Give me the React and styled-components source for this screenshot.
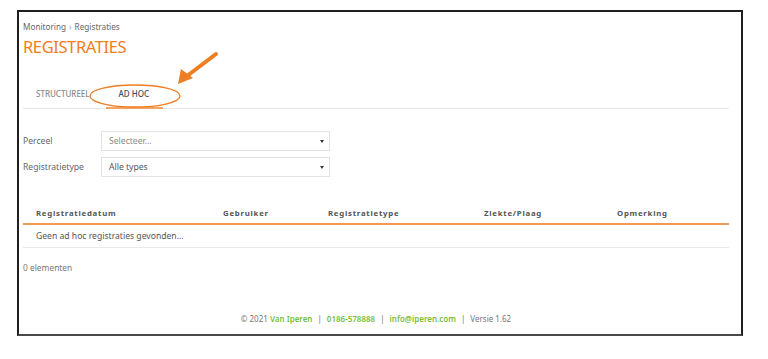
import React from "react";
import styled, { createGlobalStyle } from "styled-components";

const GlobalStyle = createGlobalStyle`
  html, body {
    margin: 0;
    padding: 0;
    background: #ffffff;
  }
  body {
    font-family: "Noto Sans", "Open Sans", sans-serif;
    color: #555;
  }
`;

const Frame = styled.div`
  position: relative;
  box-sizing: border-box;
  width: 726px;
  height: 326px;
  margin: 10px 0 0 17px;
  border: 2px solid #1f1f1f;
  border-bottom-color: #4a4a4a;
  padding: 9px 12px 0 4px;
  display: flex;
  flex-direction: column;
`;

const Breadcrumb = styled.div`
  font-size: 8.2px;
  line-height: 12px;
  color: #666;
  span {
    color: #999;
    margin: 0 3px;
  }
`;

const Title = styled.h1`
  margin: 4px 0 0;
  font-size: 16.5px;
  line-height: 20px;
  font-weight: 400;
  color: #f07d22;
  letter-spacing: -0.4px;
`;

const TabBar = styled.div`
  display: flex;
  gap: 2px;
  margin-top: 28px;
  border-bottom: 1px solid #e6e6e6;
`;

const Tab = styled.div`
  padding: 4px 14px 8px 13px;
  font-size: 8px;
  line-height: 10px;
  color: ${(p) => (p.active ? "#3d4a5c" : "#8a8a8a")};
  font-weight: 500;
  margin-bottom: -1px;
  border-bottom: 2px solid ${(p) => (p.active ? "#f5a262" : "transparent")};
`;

const Form = styled.div`
  display: flex;
  flex-direction: column;
  gap: 6px;
  margin-top: 22px;
`;

const FieldRow = styled.div`
  display: flex;
  align-items: center;
`;

const Label = styled.label`
  width: 78px;
  font-size: 8.6px;
  color: #666;
`;

const Select = styled.div`
  box-sizing: border-box;
  width: 229px;
  height: 20px;
  border: 1px solid #e2e2e2;
  display: flex;
  align-items: center;
  justify-content: space-between;
  padding: 0 5px 0 7px;
  font-size: 8.6px;
  color: ${(p) => (p.placeholder ? "#8a8a8a" : "#555")};
`;

const Caret = styled.span`
  width: 0;
  height: 0;
  border-left: 2.5px solid transparent;
  border-right: 2.5px solid transparent;
  border-top: 3px solid #333;
`;

const Table = styled.div`
  margin-top: 26px;
`;

const Grid = styled.div`
  display: grid;
  grid-template-columns: 187px 105px 156px 133px 1fr;
  align-items: center;
`;

const HeadRow = styled(Grid)`
  height: 20px;
  border-bottom: 2px solid #f39a52;
`;

const HeadCell = styled.div`
  padding-left: 13px;
  font-size: 7.8px;
  font-weight: 700;
  letter-spacing: 0.75px;
  color: #555;
`;

const EmptyRow = styled.div`
  height: 22px;
  display: flex;
  align-items: center;
  padding-left: 13px;
  font-size: 8.6px;
  color: #555;
  border-bottom: 1px solid #ebebeb;
`;

const Count = styled.div`
  margin-top: 14px;
  font-size: 8.4px;
  line-height: 12px;
  color: #777;
`;

const Footer = styled.div`
  margin-top: auto;
  padding-bottom: 9px;
  text-align: center;
  font-size: 8px;
  line-height: 12px;
  color: #777;
  a {
    color: #76bf3a;
    font-weight: 600;
    text-decoration: none;
  }
  i {
    font-style: normal;
    margin: 0 5px;
  }
`;

const Annotation = styled.svg`
  position: absolute;
  left: 0;
  top: 0;
  pointer-events: none;
`;

const columns = ["Registratiedatum", "Gebruiker", "Registratietype", "Ziekte/Plaag", "Opmerking"];

export default function App() {
  return (
    <>
      <GlobalStyle />
      <Frame>
        <Breadcrumb>
          Monitoring<span>›</span>Registraties
        </Breadcrumb>
        <Title>REGISTRATIES</Title>

        <TabBar>
          <Tab>STRUCTUREEL</Tab>
          <Tab active>AD HOC</Tab>
        </TabBar>

        <Form>
          <FieldRow>
            <Label>Perceel</Label>
            <Select placeholder>
              Selecteer...
              <Caret />
            </Select>
          </FieldRow>
          <FieldRow>
            <Label>Registratietype</Label>
            <Select>
              Alle types
              <Caret />
            </Select>
          </FieldRow>
        </Form>

        <Table>
          <HeadRow>
            {columns.map((c) => (
              <HeadCell key={c}>{c}</HeadCell>
            ))}
          </HeadRow>
          <EmptyRow>Geen ad hoc registraties gevonden...</EmptyRow>
        </Table>
        <Count>0 elementen</Count>

        <Footer>
          © 2021 <a>Van Iperen</a>
          <i>|</i>
          <a>0186-578888</a>
          <i>|</i>
          <a>info@iperen.com</a>
          <i>|</i>Versie 1.62
        </Footer>

        <Annotation width="722" height="322" viewBox="0 0 722 322">
          <ellipse cx="116" cy="84" rx="45" ry="11" fill="none" stroke="#ef7d22" strokeWidth="1.3" />
          <line x1="197" y1="42" x2="168" y2="64" stroke="#ef7d22" strokeWidth="4" strokeLinecap="round" />
          <polygon points="159,72 162,57 174,66" fill="#ef7d22" />
        </Annotation>
      </Frame>
    </>
  );
}
